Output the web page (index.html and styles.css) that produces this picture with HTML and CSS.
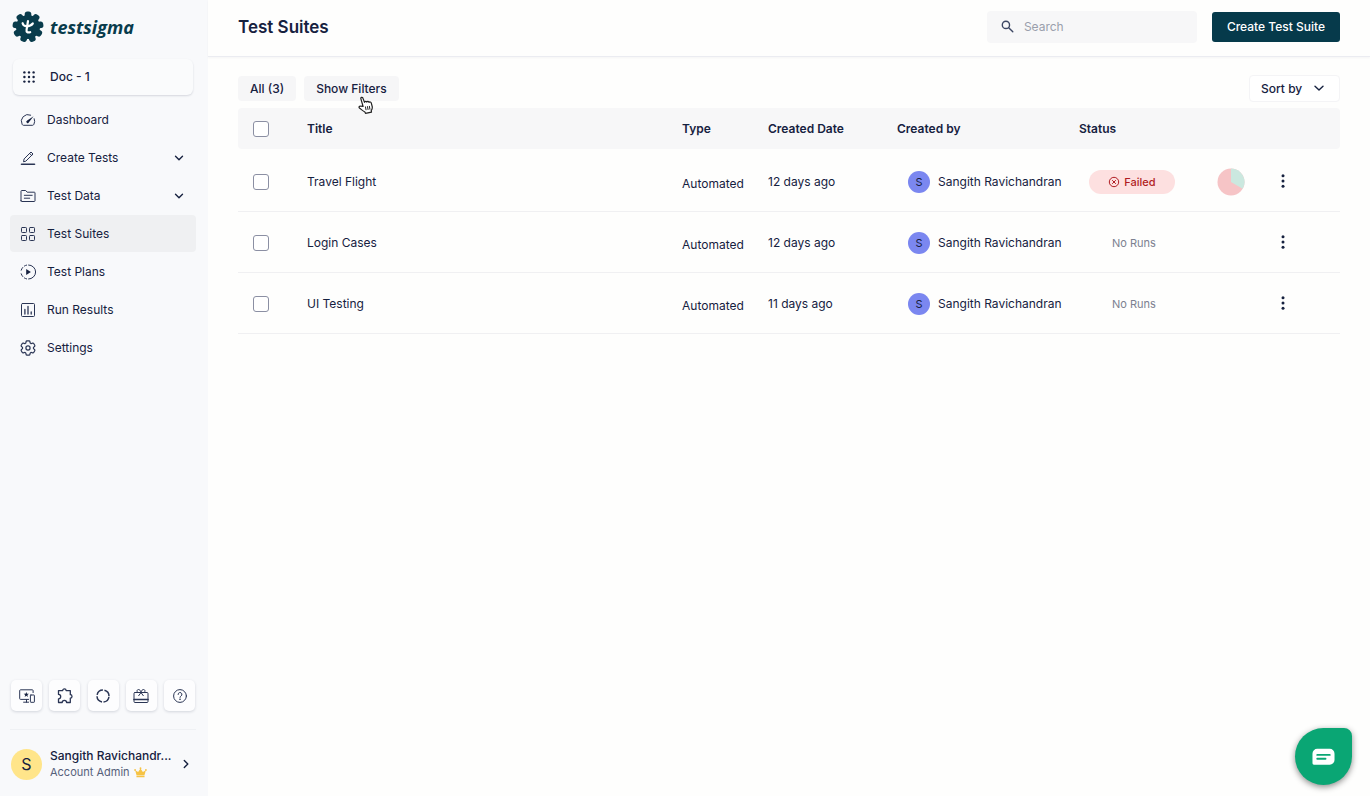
FILE: index.html
```html
<!DOCTYPE html>
<html lang="en">
<head>
<meta charset="utf-8">
<meta name="viewport" content="width=device-width, initial-scale=1">
<title>Test Suites</title>
<link rel="stylesheet" href="styles.css">
</head>
<body>
<div class="app">
  <aside class="sidebar">
    <a class="brand" href="#">
      <svg class="brand-mark" viewBox="0 0 32 32" aria-hidden="true">
        <g fill="#093c4c">
          <circle cx="16" cy="16" r="12"/>
          <rect x="12.700" y="0.500" width="6.600" height="10" rx="2.600"/>
          <rect x="12.700" y="0.500" width="6.600" height="10" rx="2.600" transform="rotate(40 16 16)"/>
          <rect x="12.700" y="0.500" width="6.600" height="10" rx="2.600" transform="rotate(80 16 16)"/>
          <rect x="12.700" y="0.500" width="6.600" height="10" rx="2.600" transform="rotate(120 16 16)"/>
          <rect x="12.700" y="0.500" width="6.600" height="10" rx="2.600" transform="rotate(160 16 16)"/>
          <rect x="12.700" y="0.500" width="6.600" height="10" rx="2.600" transform="rotate(200 16 16)"/>
          <rect x="12.700" y="0.500" width="6.600" height="10" rx="2.600" transform="rotate(240 16 16)"/>
          <rect x="12.700" y="0.500" width="6.600" height="10" rx="2.600" transform="rotate(280 16 16)"/>
          <rect x="12.700" y="0.500" width="6.600" height="10" rx="2.600" transform="rotate(320 16 16)"/>
        </g>
        <g fill="none" stroke="#fff" stroke-width="2.200" stroke-linecap="round" stroke-linejoin="round">
          <path d="M16 10 14.600 18.600q-.6 3.700 3.600 2.600"/>
          <path d="M10.600 12.200q.8 3 4 3 4.200 0 6.200-2.700"/>
        </g>
      </svg>
      <span class="brand-name">testsigma</span>
    </a>

    <button class="project" type="button">
      <svg class="icon-sm" viewBox="0 0 12 12" fill="currentColor" aria-hidden="true">
        <circle cx="1.400" cy="1.400" r="1.200"/><circle cx="6" cy="1.400" r="1.200"/><circle cx="10.600" cy="1.400" r="1.200"/>
        <circle cx="1.400" cy="6" r="1.200"/><circle cx="6" cy="6" r="1.200"/><circle cx="10.600" cy="6" r="1.200"/>
        <circle cx="1.400" cy="10.600" r="1.200"/><circle cx="6" cy="10.600" r="1.200"/><circle cx="10.600" cy="10.600" r="1.200"/>
      </svg>
      Doc - 1
    </button>

    <nav class="nav" aria-label="Main">
      <a class="nav-item" href="#">
        <svg class="icon" viewBox="0 0 16 16" aria-hidden="true"><path d="M10.700 3.100A6.700 6.700 0 0 0 2.100 12.300q.5 1 1.300 1h9.200q.8 0 1.300-1a6.700 6.700 0 0 0 .3-5.600"/><path d="M13.600 4.200 8.900 10.300a1.300 1.300 0 1 1-1.700-1.700z" fill="currentColor" stroke="none"/></svg>
        Dashboard
      </a>
      <button class="nav-item" type="button" aria-expanded="false">
        <svg class="icon" viewBox="0 0 16 16" aria-hidden="true"><path d="M1.500 14.200h13" stroke-width="1.600"/><path d="M3.600 11.400l.5-2.500 6.900-6.900 2 2-6.900 6.900zM9.600 3.400l2 2"/></svg>
        <span class="nav-text">Create Tests</span>
        <svg class="chevron" viewBox="0 0 10 10" aria-hidden="true"><path d="M1.500 3.300 5 6.800l3.500-3.500"/></svg>
      </button>
      <button class="nav-item" type="button" aria-expanded="false">
        <svg class="icon" viewBox="0 0 16 16" aria-hidden="true"><path d="M1 12.800V3.200q0-.7.7-.7h4l1.500 1.700h7.100q.7 0 .7.700v7.900q0 .7-.7.700H1.700q-.7 0-.7-.7zM4.300 7.300h7.900M4.300 10.200h5.400"/></svg>
        <span class="nav-text">Test Data</span>
        <svg class="chevron" viewBox="0 0 10 10" aria-hidden="true"><path d="M1.500 3.300 5 6.800l3.500-3.500"/></svg>
      </button>
      <a class="nav-item active" href="#" aria-current="page">
        <svg class="icon" viewBox="0 0 16 16" aria-hidden="true"><rect x="1.500" y="1.500" width="5" height="5" rx=".8"/><rect x="9.500" y="1.500" width="5" height="5" rx=".8"/><rect x="1.500" y="9.500" width="5" height="5" rx=".8"/><rect x="9.500" y="9.500" width="5" height="5" rx=".8"/></svg>
        Test Suites
      </a>
      <a class="nav-item" href="#">
        <svg class="icon" viewBox="0 0 16 16" aria-hidden="true"><path d="M8.600 1A7 7 0 0 1 8.600 15"/><path d="M6.600 1.100A7 7 0 0 0 4.400 2M2.700 3.500A7 7 0 0 0 1.200 6.200M1.200 9.800A7 7 0 0 0 2.700 12.500M4.400 14A7 7 0 0 0 6.600 14.900"/><path d="M6.200 5v6l4.700-3z" fill="currentColor" stroke="none"/></svg>
        Test Plans
      </a>
      <a class="nav-item" href="#">
        <svg class="icon" viewBox="0 0 16 16" aria-hidden="true"><rect x="1.500" y="1.500" width="13" height="13" rx="1"/><path d="M4.900 7.500V12M8 4.500V12M11.200 10V12" stroke-width="1.300"/></svg>
        Run Results
      </a>
      <a class="nav-item" href="#">
        <svg class="icon" viewBox="2 2 20 20" stroke-width="1.500" aria-hidden="true"><path d="M9.594 3.940c.09-.542.56-.94 1.110-.94h2.593c.55 0 1.020.398 1.110.94l.213 1.281c.063.374.313.686.645.87.074.04.147.083.22.127.325.196.72.257 1.075.124l1.217-.456a1.125 1.125 0 011.370.49l1.296 2.247a1.125 1.125 0 01-.26 1.431l-1.003.827c-.293.241-.438.613-.43.992a7.723 7.723 0 010 .255c-.008.378.137.75.43.991l1.004.827c.424.35.534.955.26 1.430l-1.298 2.247a1.125 1.125 0 01-1.369.491l-1.217-.456c-.355-.133-.75-.072-1.076.124a6.470 6.470 0 01-.22.128c-.331.183-.581.495-.644.869l-.213 1.281c-.09.543-.56.94-1.110.94h-2.594c-.55 0-1.019-.398-1.110-.94l-.213-1.281c-.062-.374-.312-.686-.644-.87a6.520 6.520 0 01-.22-.127c-.325-.196-.72-.257-1.076-.124l-1.217.456a1.125 1.125 0 01-1.369-.49l-1.297-2.247a1.125 1.125 0 01.26-1.431l1.004-.827c.292-.24.437-.613.43-.991a6.932 6.932 0 010-.255c.007-.38-.138-.751-.43-.992l-1.004-.827a1.125 1.125 0 01-.26-1.430l1.297-2.247a1.125 1.125 0 011.370-.491l1.216.456c.356.133.751.072 1.076-.124.072-.044.146-.086.22-.128.332-.183.582-.495.644-.869l.214-1.280z"/><circle cx="12" cy="12" r="2.600"/></svg>
        Settings
      </a>
    </nav>

    <div class="tools">
      <button class="tool" type="button" aria-label="Devices">
        <svg class="icon" viewBox="0 0 16 16" aria-hidden="true"><path d="M9.600 11.400H1.500q-.8 0-.8-.8V2.600q0-.8.8-.8h11.800q.8 0 .8.800V4.600M4.600 14.200h5"/><path d="M7.500 11.400v2.800"/><rect x="11.400" y="7" width="4" height="7.300" rx=".5"/><path d="M7.300 3.900l.7 1.800 1.900.1-1.500 1.200.5 1.900-1.600-1.100-1.600 1.100.5-1.900-1.500-1.200 1.900-.1z" fill="currentColor" stroke="none"/></svg>
      </button>
      <button class="tool" type="button" aria-label="Add-ons">
        <svg class="icon" viewBox="0 0 16 16" aria-hidden="true"><path d="M1.500 2.600h4.200a1.700 1.700 0 0 1 3.400 0h4.200v4.100a1.700 1.700 0 0 1 0 3.400v4.400H9.600a2.200 2.200 0 0 0-4.400 0H1.500V10.800a2.200 2.200 0 0 0 0-4.400z" stroke-width="1.300"/></svg>
      </button>
      <button class="tool" type="button" aria-label="Usage">
        <svg class="icon" viewBox="0 0 16 16" aria-hidden="true"><circle cx="8" cy="8" r="6" stroke-width="1.500" stroke-linecap="butt" stroke-dasharray="7.825 1.600" stroke-dashoffset="-.8"/></svg>
      </button>
      <button class="tool" type="button" aria-label="What's new">
        <svg class="icon" viewBox="0 0 16 16" aria-hidden="true"><rect x="1" y="4.500" width="14" height="10" rx="1"/><path d="M1 11.500h14" stroke-width="1.600"/><path d="M8 4.300C7.500 2.300 6.500 1.500 5.500 1.500a1.500 1.500 0 0 0-1 2.600M8 4.300c.5-2 1.500-2.800 2.500-2.800a1.500 1.500 0 0 1 1 2.600M8 4.600 5.700 7.700M8 4.600l2.300 3.100"/></svg>
      </button>
      <button class="tool" type="button" aria-label="Help">
        <svg class="icon" viewBox="0 0 16 16" aria-hidden="true"><circle cx="8" cy="8" r="6.400"/><path d="M6.100 6.500a1.900 1.900 0 1 1 2.800 1.600q-.9.500-.9 1.300"/><circle cx="8" cy="11.300" r=".8" fill="currentColor" stroke="none"/></svg>
      </button>
    </div>

    <button class="account" type="button">
      <span class="account-avatar">S</span>
      <span class="account-text">
        <span class="account-name">Sangith Ravichandr...</span>
        <span class="account-role">Account Admin
          <svg class="crown" viewBox="0 0 14 12" fill="#f6c344" aria-hidden="true"><path d="M2.600 8.600 1.200 3.600 4.400 5.400 7 1.600l2.600 3.800 3.200-1.800-1.400 5zM2.600 9.400h8.800v1.700H2.600z"/><circle cx="1.100" cy="3.300" r="1"/><circle cx="7" cy="1.400" r="1"/><circle cx="12.900" cy="3.300" r="1"/></svg>
        </span>
      </span>
      <svg class="chevron" viewBox="0 0 10 10" aria-hidden="true"><path d="M3.300 1.500 6.800 5 3.300 8.500"/></svg>
    </button>
  </aside>

  <main class="main">
    <header class="topbar">
      <h1 class="page-title">Test Suites</h1>
      <label class="search">
        <svg class="search-icon" viewBox="0 0 14 14" aria-hidden="true"><circle cx="5.300" cy="5.300" r="3.900"/><path d="M8.300 8.300 12.700 12.700"/></svg>
        <input class="search-input" type="search" placeholder="Search" aria-label="Search">
      </label>
      <button class="primary" type="button">Create Test Suite</button>
    </header>

    <section class="content">
      <div class="toolbar">
        <button class="chip" type="button">All (3)</button>
        <div class="pointer-host">
          <button class="chip" type="button">Show Filters</button>
          <svg class="pointer" viewBox="0 0 16 18" aria-hidden="true"><path d="M5.100 10.500 2.900 2.800C2.500 1.300 4.300.7 4.900 2.100L6.500 6.300C6.700 5 8.400 5 8.800 6.100 9.300 5 10.700 5.200 11 6.400c.8-.8 2-.4 2.300.7l.9 3.400c.4 1.800-.2 3-1 4.200l.3 1.500-6 1.100-.6-1.300C5.300 15.300 3.500 13.600 1.700 12.300.3 11.200 1.400 9.700 2.900 10.200z" fill="#fff" stroke="#222" stroke-width="1.200" stroke-linejoin="round"/><path d="M7.400 10.500l.7 3.700M9.400 10.200l.7 3.700M11.300 9.900l.7 3.700" fill="none" stroke="#222"/></svg>
        </div>
        <div class="sort">
          <select class="sort-select" aria-label="Sort by"><option>Sort by</option></select>
          <svg class="chevron sort-chevron" viewBox="0 0 10 10" aria-hidden="true"><path d="M1 3.200 5 7l4-3.800"/></svg>
        </div>
      </div>

      <table class="suites">
        <colgroup>
          <col class="col-check"><col><col class="col-type"><col class="col-date"><col class="col-by"><col class="col-status"><col class="col-chart"><col class="col-menu">
        </colgroup>
        <thead>
          <tr>
            <th class="check"><input class="box" type="checkbox" aria-label="Select all"></th>
            <th>Title</th><th>Type</th><th>Created Date</th><th>Created by</th><th>Status</th><th></th><th></th>
          </tr>
        </thead>
        <tbody>
          <tr>
            <td class="check"><input class="box" type="checkbox" aria-label="Select Travel Flight"></td>
            <td>Travel Flight</td>
            <td class="type">Automated</td>
            <td>12 days ago</td>
            <td><span class="person"><span class="person-avatar">S</span>Sangith Ravichandran</span></td>
            <td><span class="failed"><svg class="failed-icon" viewBox="0 0 12 12" aria-hidden="true"><circle cx="6" cy="6" r="4.700"/><path d="M4.200 4.200l3.600 3.600M7.800 4.200 4.200 7.800"/></svg>Failed</span></td>
            <td><svg class="pie" viewBox="0 0 28 28" role="img" aria-label="Run breakdown"><circle cx="14" cy="14" r="13.500" fill="#f6c4c6"/><path d="M14 14V.5A13.500 13.500 0 0 1 25.700 20.750z" fill="#cbe8df"/></svg></td>
            <td><button class="menu" type="button" aria-label="More actions"><svg class="dots" viewBox="0 0 4 14" aria-hidden="true"><circle cx="2" cy="1.700" r="1.500"/><circle cx="2" cy="7" r="1.500"/><circle cx="2" cy="12.300" r="1.500"/></svg></button></td>
          </tr>
          <tr>
            <td class="check"><input class="box" type="checkbox" aria-label="Select Login Cases"></td>
            <td>Login Cases</td>
            <td class="type">Automated</td>
            <td>12 days ago</td>
            <td><span class="person"><span class="person-avatar">S</span>Sangith Ravichandran</span></td>
            <td><span class="no-runs">No Runs</span></td>
            <td></td>
            <td><button class="menu" type="button" aria-label="More actions"><svg class="dots" viewBox="0 0 4 14" aria-hidden="true"><circle cx="2" cy="1.700" r="1.500"/><circle cx="2" cy="7" r="1.500"/><circle cx="2" cy="12.300" r="1.500"/></svg></button></td>
          </tr>
          <tr>
            <td class="check"><input class="box" type="checkbox" aria-label="Select UI Testing"></td>
            <td>UI Testing</td>
            <td class="type">Automated</td>
            <td>11 days ago</td>
            <td><span class="person"><span class="person-avatar">S</span>Sangith Ravichandran</span></td>
            <td><span class="no-runs">No Runs</span></td>
            <td></td>
            <td><button class="menu" type="button" aria-label="More actions"><svg class="dots" viewBox="0 0 4 14" aria-hidden="true"><circle cx="2" cy="1.700" r="1.500"/><circle cx="2" cy="7" r="1.500"/><circle cx="2" cy="12.300" r="1.500"/></svg></button></td>
          </tr>
        </tbody>
      </table>
    </section>
  </main>

  <button class="chat" type="button" aria-label="Open chat">
    <svg class="chat-icon" viewBox="0 0 24 18" aria-hidden="true"><path d="M5.500.5h13A5 5 0 0 1 23.500 5.500v6.500a5 5 0 0 1-5 5h-16.500Q.5 17 .5 15.500V5.500A5 5 0 0 1 5.500.5z" fill="#fff"/><path d="M5.500 6.800h13M5.500 10.900h8.600" stroke="#0aa674" stroke-width="2" stroke-linecap="round"/></svg>
  </button>
</div>
</body>
</html>
```

FILE: styles.css
```css
* {
  box-sizing: border-box;
}

body {
  margin: 0;
  background: #fefefd;
  color: #16213f;
  font-family: Inter, "Liberation Sans", sans-serif;
  font-size: 12px;
  line-height: 16px;
}

button,
input,
select {
  color: inherit;
  font: inherit;
}

button {
  margin: 0;
  padding: 0;
  border: 0;
  background: none;
  text-align: left;
}

a {
  color: inherit;
  text-decoration: none;
}

svg {
  flex: none;
}

.app {
  display: flex;
  min-height: 100vh;
}

/* Sidebar */

.sidebar {
  display: flex;
  flex: none;
  flex-direction: column;
  width: 208px;
  padding: 11px 12px 16px 10px;
  background: #f8f9fb;
}

.brand {
  display: flex;
  align-items: center;
  gap: 6px;
  padding-left: 2px;
  color: #093c4c;
}

.brand-mark {
  width: 32px;
  height: 32px;
}

.brand-name {
  font-family: "Open Sans", "Noto Sans", sans-serif;
  font-size: 18px;
  font-style: italic;
  font-weight: 700;
  line-height: 24px;
}

.project {
  display: flex;
  align-items: center;
  gap: 15px;
  height: 36px;
  margin: 16px 3px 0;
  padding: 0 10px;
  border-radius: 6px;
  background: #fafbfc;
  box-shadow: 0 1px 2px rgba(20, 30, 60, 0.15);
  font-weight: 500;
}

.icon-sm {
  width: 12px;
  height: 12px;
}

.nav {
  display: flex;
  flex-direction: column;
  gap: 1px;
  margin-top: 6px;
}

.nav-item {
  display: flex;
  align-items: center;
  gap: 11px;
  height: 37px;
  padding: 0 12px 0 10px;
  border-radius: 4px;
}

.nav-item.active {
  background: #eff0f2;
}

.nav-text {
  flex: 1;
}

.icon {
  width: 16px;
  height: 16px;
  fill: none;
  stroke: #2a3554;
  stroke-linecap: round;
  stroke-linejoin: round;
}

.chevron {
  width: 10px;
  height: 10px;
  fill: none;
  stroke: currentColor;
  stroke-linecap: round;
  stroke-linejoin: round;
  stroke-width: 1.4;
}

.tools {
  display: flex;
  justify-content: space-between;
  margin-top: auto;
  padding: 0 1px 18px;
  border-bottom: 1px solid #eff1f4;
}

.tool {
  display: flex;
  align-items: center;
  justify-content: center;
  width: 31px;
  height: 31px;
  border-radius: 5px;
  background: #fdfdfe;
  box-shadow: 0 1px 3px rgba(20, 30, 60, 0.16);
}

.account {
  display: flex;
  align-items: center;
  gap: 8px;
  margin-top: 18px;
  padding: 0 5px 0 1px;
}

.account-avatar {
  display: flex;
  flex: none;
  align-items: center;
  justify-content: center;
  width: 31px;
  height: 31px;
  border-radius: 50%;
  background: #ffe58a;
  font-size: 16px;
}

.account-text {
  display: flex;
  flex: 1;
  flex-direction: column;
  min-width: 0;
}

.account-name {
  font-weight: 500;
  white-space: nowrap;
}

.account-role {
  display: flex;
  align-items: center;
  gap: 4px;
  color: #56607a;
  font-size: 11px;
}

.crown {
  width: 13px;
  height: 11px;
}

/* Page header */

.main {
  flex: 1;
  min-width: 0;
}

.topbar {
  display: flex;
  align-items: center;
  height: 57px;
  padding: 0 30px 3px;
  border-bottom: 1px solid #ebecf1;
  box-shadow: 0 1px 2px rgba(20, 30, 60, 0.04);
}

.page-title {
  flex: 1;
  margin: 0;
  font-size: 17px;
  font-weight: 600;
  line-height: 24px;
}

.search {
  display: flex;
  align-items: center;
  gap: 10px;
  width: 210px;
  height: 32px;
  margin-right: 15px;
  padding: 0 14px;
  border-radius: 4px;
  background: #f7f7f8;
}

.search-icon {
  width: 13px;
  height: 13px;
  fill: none;
  stroke: #3c4663;
  stroke-linecap: round;
  stroke-width: 1.5;
}

.search-input {
  flex: 1;
  min-width: 0;
  padding: 0;
  border: 0;
  outline: 0;
  background: none;
}

.search-input::placeholder {
  color: #9a9fac;
}

.primary {
  height: 30px;
  padding: 0 15px;
  border-radius: 3px;
  background: #063a4b;
  color: #fff;
  font-weight: 500;
}

/* Toolbar and table */

.content {
  padding: 18px 30px;
}

.toolbar {
  display: flex;
  align-items: center;
  gap: 8px;
  height: 27px;
}

.chip {
  height: 25px;
  padding: 0 12px;
  border-radius: 4px;
  background: #f6f6f7;
  font-weight: 500;
}

.pointer-host {
  position: relative;
}

.pointer {
  position: absolute;
  top: 20px;
  right: 25px;
  width: 16px;
  height: 18px;
}

.sort {
  position: relative;
  margin-left: auto;
}

.sort-select {
  width: 91px;
  height: 27px;
  padding: 0 11px;
  border: 1px solid #f4f4f6;
  border-radius: 4px;
  appearance: none;
  background: #fff;
  font-weight: 500;
}

.sort-chevron {
  position: absolute;
  top: 8px;
  right: 16px;
  pointer-events: none;
}

.suites {
  width: 100%;
  margin-top: 6px;
  border-spacing: 0;
  table-layout: fixed;
}

.col-check { width: 69px; }
.col-type { width: 86px; }
.col-date { width: 129px; }
.col-by { width: 182px; }
.col-status { width: 138px; }
.col-chart { width: 52px; }
.col-menu { width: 71px; }

.suites th {
  height: 41px;
  padding: 0;
  background: #f7f7f8;
  font-weight: 600;
  text-align: left;
}

.suites th:first-child {
  border-radius: 4px 0 0 4px;
}

.suites th:last-child {
  border-radius: 0 4px 4px 0;
}

.suites td {
  height: 61px;
  padding: 2px 0 0;
  border-bottom: 1px solid #f0f0f2;
}

.suites tbody tr:first-child td {
  height: 63px;
  padding-top: 4px;
}

.suites .check {
  padding-left: 15px;
}

.suites tbody td.type {
  padding-top: 6px;
}

.suites tbody tr:first-child td.type {
  padding-top: 8px;
}

.box {
  display: block;
  width: 16px;
  height: 16px;
  margin: 0;
  border: 1px solid #8b8fa3;
  border-radius: 3px;
  appearance: none;
  background: #fff;
}

.person {
  display: flex;
  align-items: center;
  gap: 8px;
  padding-left: 11px;
  white-space: nowrap;
}

.person-avatar {
  display: flex;
  align-items: center;
  justify-content: center;
  width: 22px;
  height: 22px;
  border-radius: 50%;
  background: #7b87f0;
  font-size: 11px;
}

.failed {
  display: flex;
  align-items: center;
  justify-content: center;
  gap: 4px;
  width: 86px;
  height: 24px;
  margin-left: 10px;
  border-radius: 12px;
  background: #fde0e0;
  color: #b01c22;
  font-size: 11px;
  font-weight: 500;
}

.failed-icon {
  width: 12px;
  height: 12px;
  fill: none;
  stroke: currentColor;
}

.no-runs {
  padding-left: 33px;
  color: #7c8190;
  font-size: 11px;
}

.pie {
  display: block;
  width: 28px;
  height: 28px;
}

.menu {
  display: flex;
  align-items: center;
  justify-content: center;
  width: 28px;
  height: 28px;
  margin-bottom: 2px;
}

.dots {
  width: 4px;
  height: 14px;
  fill: currentColor;
}

/* Chat launcher */

.chat {
  position: fixed;
  right: 18px;
  bottom: 11px;
  display: flex;
  align-items: center;
  justify-content: center;
  width: 57px;
  height: 57px;
  border-radius: 50% 8px 50% 50%;
  background: #0aa674;
  box-shadow: 0 2px 6px rgba(0, 0, 0, 0.45);
}

.chat-icon {
  width: 23px;
  height: 18px;
}
```
